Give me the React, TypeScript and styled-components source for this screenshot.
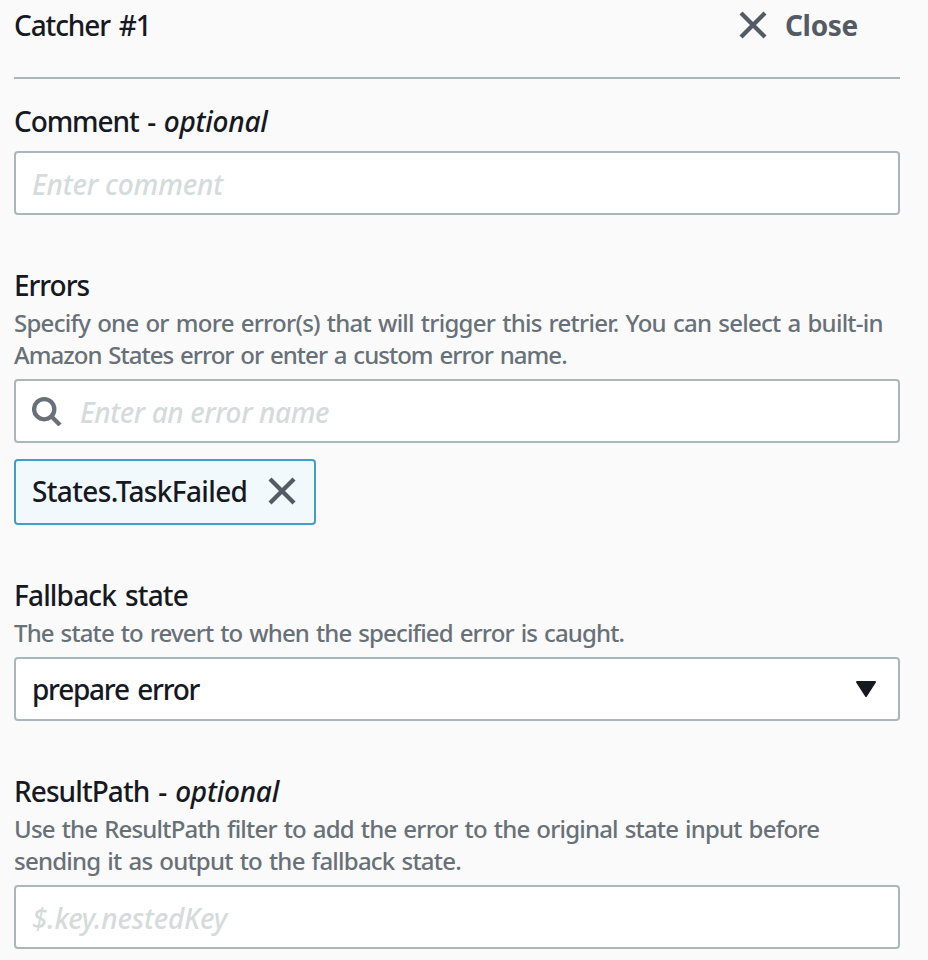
import React from "react";
import styled, { createGlobalStyle } from "styled-components";

const GlobalStyle = createGlobalStyle`
  * { box-sizing: border-box; }
  body { margin: 0; background: #fafafa; }
`;

const Panel = styled.main`
  display: flex;
  flex-direction: column;
  gap: 52px;
  width: 928px;
  height: 960px;
  padding: 0 28px 0 14px;
  overflow: hidden;
  background: #fafafa;
  color: #16191f;
  font: 500 28px/34px "Noto Sans", "Open Sans", sans-serif;
`;

const Header = styled.header`
  display: flex;
  flex: none;
  justify-content: space-between;
  align-items: flex-start;
  height: 79px;
  margin-bottom: -28px;
  padding: 8px 42px 0 0;
  border-bottom: 2px solid #aab7b8;
`;

const Title = styled.h1`
  margin: 0;
  font: inherit;
  letter-spacing: -1.1px;
  word-spacing: 2.5px;
`;

const CloseButton = styled.button`
  display: flex;
  align-items: center;
  gap: 18px;
  padding: 0;
  border: 0;
  background: none;
  color: #545b64;
  font: inherit;
  font-weight: 700;
  letter-spacing: -0.3px;
`;

const Field = styled.section`
  display: flex;
  flex: none;
  flex-direction: column;
`;

const Label = styled.label<{ $tracking: number }>`
  height: 34px;
  padding-top: 1px;
  letter-spacing: ${p => p.$tracking}px;
  word-spacing: 2.5px;
  white-space: pre;

  i { letter-spacing: -0.25px; }
`;

const Hint = styled.p`
  margin: 6px 0 0;
  color: #687078;
  font-size: 24px;
  line-height: 32px;
  word-spacing: 1.5px;
`;

const HintLine = styled.span<{ $tracking: number }>`
  display: block;
  letter-spacing: ${p => p.$tracking}px;
  white-space: nowrap;
`;

const Control = styled.div<{ $spaced?: boolean }>`
  display: flex;
  align-items: center;
  gap: 18px;
  height: 64px;
  margin-top: ${p => (p.$spaced ? 14 : 8)}px;
  padding: 0 16px;
  border: 2px solid #aab7b8;
  border-radius: 4px;
  background: #fff;
`;

const TextInput = styled.input<{ $tracking: number }>`
  flex: 1;
  min-width: 0;
  height: 46px;
  padding: 2px 0 0;
  border: 0;
  outline: 0;
  background: transparent;
  color: inherit;
  font: inherit;
  line-height: 44px;
  letter-spacing: ${p => p.$tracking}px;

  &::placeholder {
    color: #d5dbdb;
    font-style: italic;
    opacity: 1;
  }
`;

const SelectControl = styled(Control)`
  justify-content: space-between;
  padding-right: 21px;
`;

const SelectValue = styled.span`
  letter-spacing: -1.25px;
  word-spacing: 2.5px;
`;

const Token = styled.div`
  display: flex;
  align-items: center;
  justify-content: space-between;
  width: 302px;
  height: 66px;
  margin-top: 16px;
  padding: 0 18px 3px 16px;
  border: 2px solid #429ec6;
  border-radius: 4px;
  background: #f2f9fd;
  letter-spacing: -0.65px;
`;

const RemoveButton = styled.button`
  display: flex;
  padding: 0;
  border: 0;
  background: none;
  color: #545b64;
`;

const Icon = styled.svg`
  display: block;
  flex: none;
`;

const CrossIcon = () => (
  <Icon width="28" height="28" viewBox="0 0 28 28" fill="none" stroke="currentColor" strokeWidth="4.3">
    <path d="M2 2 26 26M26 2 2 26" />
  </Icon>
);

const SearchIcon = () => (
  <Icon width="30" height="30" viewBox="0 0 30 30" fill="none" stroke="#687078" strokeWidth="4.3">
    <circle cx="12.2" cy="13.2" r="10.1" />
    <path d="M19.5 20.5 28 29" />
  </Icon>
);

const CaretIcon = () => (
  <Icon width="22" height="18" viewBox="0 0 22 18" fill="#16191f" stroke="#16191f" strokeWidth="2" strokeLinejoin="round">
    <path d="M2 2H20L11 16Z" />
  </Icon>
);

export default function App() {
  return (
    <>
      <GlobalStyle />
      <Panel>
        <Header>
          <Title>Catcher #1</Title>
          <CloseButton><CrossIcon />Close</CloseButton>
        </Header>

        <Field>
          <Label $tracking={-1.1} htmlFor="comment">Comment - <i>optional</i></Label>
          <Control $spaced>
            <TextInput id="comment" $tracking={-0.17} placeholder="Enter comment" />
          </Control>
        </Field>

        <Field>
          <Label $tracking={-1.05} htmlFor="errors">Errors</Label>
          <Hint>
            <HintLine $tracking={-0.74}>Specify one or more error(s) that will trigger this retrier. You can select a built-in</HintLine>
            <HintLine $tracking={-0.97}>Amazon States error or enter a custom error name.</HintLine>
          </Hint>
          <Control>
            <SearchIcon />
            <TextInput id="errors" $tracking={-0.4} placeholder="Enter an error name" />
          </Control>
          <Token>
            States.TaskFailed
            <RemoveButton aria-label="Remove"><CrossIcon /></RemoveButton>
          </Token>
        </Field>

        <Field>
          <Label $tracking={-0.83}>Fallback state</Label>
          <Hint>
            <HintLine $tracking={-0.86}>The state to revert to when the specified error is caught.</HintLine>
          </Hint>
          <SelectControl>
            <SelectValue>prepare error</SelectValue>
            <CaretIcon />
          </SelectControl>
        </Field>

        <Field>
          <Label $tracking={-0.92} htmlFor="result-path">ResultPath - <i>optional</i></Label>
          <Hint>
            <HintLine $tracking={-0.81}>Use the ResultPath filter to add the error to the original state input before</HintLine>
            <HintLine $tracking={-0.77}>sending it as output to the fallback state.</HintLine>
          </Hint>
          <Control>
            <TextInput id="result-path" $tracking={-0.2} placeholder="$.key.nestedKey" />
          </Control>
        </Field>
      </Panel>
    </>
  );
}
